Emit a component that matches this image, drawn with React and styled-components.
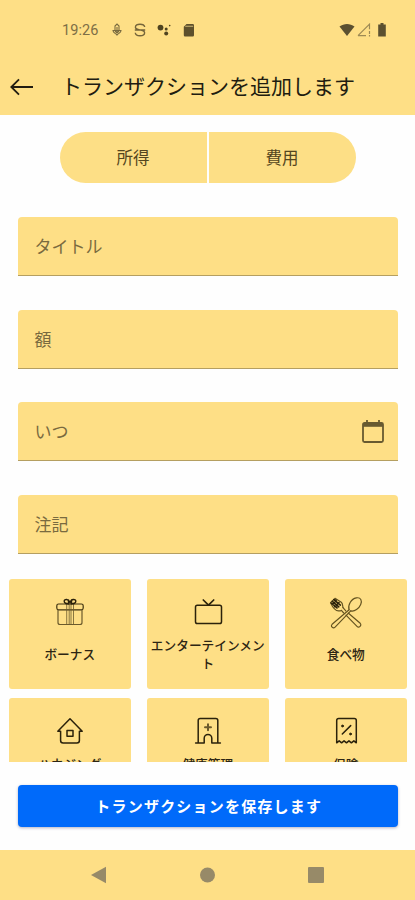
import styled, { createGlobalStyle } from "styled-components";

const GlobalStyle = createGlobalStyle`
  * {
    box-sizing: border-box;
  }

  body {
    margin: 0;
    background-color: #ffffff;
    font-family: Roboto, "Noto Sans CJK JP", sans-serif;
  }

  svg {
    display: block;
  }
`;

const Screen = styled.div`
  display: flex;
  flex-direction: column;
  width: 415px;
  height: 900px;
  overflow: hidden;
  background-color: #fefefe;
`;

const Header = styled.header`
  height: 115px;
  flex-shrink: 0;
  background-color: #fedf86;
`;

const StatusBar = styled.div`
  display: flex;
  align-items: center;
  height: 60px;
  padding: 0 27px 0 62px;
`;

const Clock = styled.span`
  width: 48px;
  font-size: 14.5px;
  letter-spacing: 0.1px;
  color: #7d6e45;
`;

const StatusIcons = styled.div`
  display: flex;
  align-items: center;
  gap: ${(props) => props.$gap};
  margin-left: ${(props) => props.$push || "0"};
`;

const TitleBar = styled.div`
  display: flex;
  align-items: center;
  height: 53px;
  padding-left: 9px;
`;

const BackButton = styled.button`
  width: 52px;
  padding: 0;
  border: 0;
  background: none;
`;

const PageTitle = styled.h1`
  margin: 0;
  padding-top: 1px;
  font-size: 21px;
  font-weight: 400;
  line-height: 30px;
  white-space: nowrap;
  color: #211c10;
`;

const Toggle = styled.div`
  display: flex;
  flex-shrink: 0;
  gap: 2px;
  width: 296px;
  height: 51px;
  margin: 17px 0 0 60px;
  border-radius: 26px;
  overflow: hidden;
`;

const ToggleItem = styled.button`
  flex: 1;
  padding: 0 1px 1px 0;
  border: 0;
  background-color: #fddf86;
  font-family: inherit;
  font-size: 16.5px;
  color: #544620;
`;

const Form = styled.div`
  display: flex;
  flex-direction: column;
  flex-shrink: 0;
  gap: 33.6px;
  padding: 34px 17px 0 17.5px;
`;

const Field = styled.div`
  display: flex;
  align-items: center;
  justify-content: space-between;
  height: 59px;
  padding: 0 13px 1px 17px;
  border-bottom: 1.4px solid #b59f61;
  border-radius: 4px 4px 0 0;
  background-color: #fedf86;
  font-size: 17px;
  color: #796a3f;
`;

const Categories = styled.div`
  display: grid;
  grid-template-columns: repeat(3, 121.5px);
  grid-template-rows: 110px 92px;
  gap: 9px 16.5px;
  flex-shrink: 0;
  height: 183px;
  margin-top: 25px;
  padding-left: 9px;
  overflow: hidden;
`;

const Category = styled.div`
  display: flex;
  flex-direction: column;
  align-items: center;
  padding: 16px 3px 8px;
  border-radius: 3px;
  background-color: #fedf86;
`;

const CategoryLabel = styled.div`
  display: flex;
  flex: 1;
  align-items: center;
  font-size: 12.7px;
  font-weight: 500;
  line-height: 18px;
  text-align: center;
  color: #2d2513;
`;

const SaveButton = styled.button`
  flex-shrink: 0;
  height: 42px;
  margin: 23px 17px 0 17.5px;
  padding: 0 0 1px 2px;
  border: 0;
  border-radius: 4px;
  background-color: #006afa;
  box-shadow: 0 1px 3px rgba(40, 40, 90, 0.35);
  font-family: inherit;
  font-size: 15px;
  font-weight: 700;
  letter-spacing: 1.2px;
  color: #ffffff;
`;

const NavBar = styled.nav`
  display: flex;
  align-items: center;
  justify-content: space-between;
  height: 50px;
  flex-shrink: 0;
  margin-top: auto;
  padding: 0 91px;
  background-color: #fedf86;
`;

const LineIcon = ({ children, ...rest }) => (
  <svg
    width="34"
    height="34"
    viewBox="0 0 34 34"
    fill="none"
    stroke="#2b220b"
    strokeWidth="1.5"
    strokeLinejoin="round"
    strokeLinecap="round"
    {...rest}
  >
    {children}
  </svg>
);

const GiftIcon = () => (
  <LineIcon stroke="#6b5a2c" strokeWidth="1.2">
    <rect x="3.8" y="9" width="26.4" height="5.8" rx="1.8" stroke="#3f3310" />
    <path d="M5 15v12.500a2 2 0 0 0 2 2h20a2 2 0 0 0 2-2V15" />
    <path d="M13.700 9v20.500M16.200 9v20.500M18 9v20.500M20.500 9v20.500" strokeWidth=".8" />
    <path
      d="M16 8.700c-3 .2-4.800-.6-4.800-2.400 0-2.600 4.500-2.600 5.800 1.300 1.300-3.900 5.800-3.900 5.800-1.300 0 1.800-1.800 2.600-4.800 2.400M15.500 5v4M18.500 5v4"
      stroke="#2b220b"
      strokeWidth="1.4"
    />
  </LineIcon>
);

const TvIcon = () => (
  <LineIcon>
    <rect x="4.500" y="10.300" width="26" height="18.200" rx="1.800" />
    <path d="m12.300 5 5.200 5.200L22.700 5" strokeWidth="1.700" />
  </LineIcon>
);

const FoodIcon = () => (
  <LineIcon stroke="#63521f" strokeWidth="1.15">
    <path d="m14 12.700 2.800 3.200M19.200 18l12 10.300c2 2-1.300 5-3.200 3L17 20.200M12.400 15.400l2.300 2.600" />
    <path d="M20.100 14.800 3.100 29.300c-2 2 1 4.800 3 2.800l15.600-16.200" />
    <path d="M20.100 14.800c-1.600-4.500 2-11 7.200-11.900 4.600-.8 6 2.800 4.400 6.500-1.800 4.300-6 7.400-10 6.500" />
    <path d="M6 3.300 1.500 7.700c1.800 3.800 4 8.400 8.200 8.200.9 0 1.900-.1 2.700-.5M6 3.300l6.300 3.900c1.700 1.300 1.200 3.700 1.700 5.500" />
    <path
      d="m3.300 6.300 6.500 5.500M4.800 4.700l6.600 5.400M2.200 8l5.800 4.900M7.200 5.700 3.800 9M10 7.500l-4.300 4.200"
      stroke="#2b220b"
      strokeWidth="1.6"
    />
  </LineIcon>
);

const HouseIcon = () => (
  <LineIcon>
    <path d="M4.800 17.200 17 4.800l12.200 12.400h-2.800v9.300a2.500 2.500 0 0 1-2.500 2.500H10.100a2.500 2.500 0 0 1-2.500-2.500v-9.300z" />
    <rect x="14" y="16.500" width="6" height="5.800" />
  </LineIcon>
);

const HospitalIcon = () => (
  <LineIcon>
    <path d="M7.200 29V6.600a2 2 0 0 1 2-2h15.600a2 2 0 0 1 2 2V29M4.600 29h8.600v-4.700a3.800 3.800 0 0 1 7.600 0V29h8.600" />
    <path d="M17 10.200v6M14 13.200h6" stroke="#6b5a2c" strokeWidth="2" />
  </LineIcon>
);

const ReceiptIcon = () => (
  <LineIcon>
    <path d="M7.700 28.800V6.600a2 2 0 0 1 2-2h15.600a2 2 0 0 1 2 2v22.200l-2.450-2-2.450 2-2.450-2-2.450 2-2.450-2-2.450 2-2.450-2-2.450 2z" />
    <path d="m13.300 20 8.400-8.400" />
    <circle cx="13.500" cy="12" r="1" fill="#2b220b" strokeWidth=".8" />
    <circle cx="21.500" cy="20" r="1" fill="#2b220b" strokeWidth=".8" />
  </LineIcon>
);

const DownloadStatus = () => (
  <svg width="10" height="14" viewBox="0 0 10 14" fill="none" stroke="#796a3f" strokeWidth="1.1">
    <path d="M3 7V3l2-2 2 2v4M1 7.500h8c0 2-2.200 2.600-4 4.500C3.200 10.100 1 9.500 1 7.500ZM5 4v6M3 8l2 2 2-2" />
  </svg>
);

const SyncStatus = () => (
  <svg width="12" height="14" viewBox="0 0 12 14" fill="none" stroke="#75653a" strokeWidth="1.4">
    <path d="M10.700 4C10.400 2 8.700 1.200 6 1.200S1.400 2.100 1.400 4.200c0 3.800 9.200 1.400 9.200 5.500 0 2.100-1.900 3.100-4.600 3.100S1.400 12 1.300 9.800M.8 7h10.400" />
  </svg>
);

const DotsStatus = () => (
  <svg width="14" height="12" viewBox="0 0 14 12" fill="#4f431f">
    <circle cx="3.500" cy="3.600" r="2.900" />
    <circle cx="9.200" cy="5" r="1.500" />
    <circle cx="9.200" cy="9.500" r="2" />
    <circle cx="12.700" cy="1.600" r=".8" />
  </svg>
);

const CardStatus = () => (
  <svg width="12" height="14" viewBox="0 0 12 14">
    <path d="M3.500 1h6.200a1.300 1.300 0 0 1 1.300 1.300v10a1.200 1.200 0 0 1-1.200 1.200H2A1.200 1.200 0 0 1 .8 12.300V3.700z" fill="#5e502b" />
    <path d="M2.200 3.300h8" stroke="#bba668" strokeWidth="1.2" />
  </svg>
);

const categories = [
  { label: "ボーナス", Icon: GiftIcon },
  { label: "エンターテインメント", Icon: TvIcon },
  { label: "食べ物", Icon: FoodIcon },
  { label: "ハウジング", Icon: HouseIcon },
  { label: "健康管理", Icon: HospitalIcon },
  { label: "保険", Icon: ReceiptIcon },
];

const App = () => {
  return (
    <>
      <GlobalStyle />
      <Screen>
        <Header>
          <StatusBar>
            <Clock>19:26</Clock>
            <StatusIcons $gap="11.5px" $push="2px">
              <DownloadStatus />
              <SyncStatus />
              <DotsStatus />
              <CardStatus />
            </StatusIcons>
            <StatusIcons $gap="2px" $push="auto">
              <svg width="16" height="14" viewBox="0 0 16 14">
                <path d="M.5 3.500C5 0 11 0 15.500 3.500L8 13z" fill="#5b5030" />
              </svg>
              <svg width="14" height="14" viewBox="0 0 14 14" fill="none" stroke="#9d8a54">
                <path d="M1 12.700 12.500 1.200v5M1 12.700h8M12.500 8v3M12.500 12v1.500" strokeWidth="1.2" />
              </svg>
              <svg width="15" height="14" viewBox="0 0 15 14" fill="#5b5030">
                <path d="M7.500 0h3v1.500h2.300V13.500H5.200V1.500h2.300z" />
              </svg>
            </StatusIcons>
          </StatusBar>
          <TitleBar>
            <BackButton aria-label="戻る">
              <svg width="25" height="20" viewBox="0 0 25 20" fill="none" stroke="#211c10" strokeWidth="1.8">
                <path d="M24 10H2.500M10 2.300 2.300 10l7.700 7.700" />
              </svg>
            </BackButton>
            <PageTitle>トランザクションを追加します</PageTitle>
          </TitleBar>
        </Header>
        <Toggle>
          <ToggleItem>所得</ToggleItem>
          <ToggleItem>費用</ToggleItem>
        </Toggle>
        <Form>
          <Field>タイトル</Field>
          <Field>額</Field>
          <Field>
            いつ
            <svg width="24" height="24" viewBox="0 0 24 24" fill="none" stroke="#685a30" strokeWidth="1.8">
              <rect x="2" y="4" width="20" height="19" rx="1.5" />
              <path d="M2 6h20" strokeWidth="3.6" />
              <path d="M6 1v4M18 1v4" />
            </svg>
          </Field>
          <Field>注記</Field>
        </Form>
        <Categories>
          {categories.map(({ label, Icon }) => (
            <Category key={label}>
              <Icon />
              <CategoryLabel>{label}</CategoryLabel>
            </Category>
          ))}
        </Categories>
        <SaveButton>トランザクションを保存します</SaveButton>
        <NavBar>
          <svg width="15" height="18" viewBox="0 0 15 18">
            <path d="M0 9 15 .8v16.400z" fill="#978a68" />
          </svg>
          <svg width="16" height="16" viewBox="0 0 16 16">
            <circle cx="8.5" cy="8" r="7.5" fill="#978a68" />
          </svg>
          <svg width="16" height="16" viewBox="0 0 16 16">
            <rect width="16" height="16" rx="1" fill="#978a68" />
          </svg>
        </NavBar>
      </Screen>
    </>
  );
};

export default App;
